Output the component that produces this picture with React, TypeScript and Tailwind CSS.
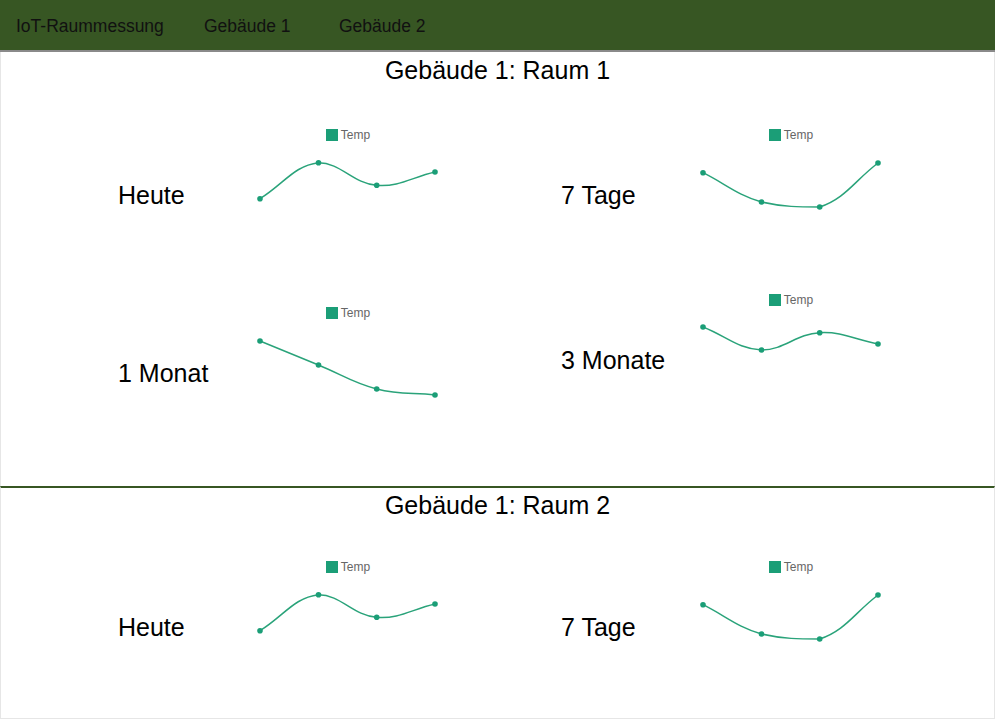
import React from "react";

type Pt = [number, number];

const XS = [12, 70.5, 128.7, 187];

function splinePath(ys: number[]): string {
  const pts: Pt[] = ys.map((y, i) => [XS[i], y]);
  const top = Math.min(...ys);
  const bottom = Math.max(...ys);
  const clamp = (v: number) => Math.max(top, Math.min(bottom, v));
  const t = 0.4;
  const cps: { p: Pt; n: Pt }[] = pts.map((cur, i) => {
    const prev = pts[i - 1] || cur;
    const next = pts[i + 1] || cur;
    const d01 = Math.hypot(cur[0] - prev[0], cur[1] - prev[1]);
    const d12 = Math.hypot(next[0] - cur[0], next[1] - cur[1]);
    const sum = d01 + d12 || 1;
    const fa = (t * d01) / sum;
    const fb = (t * d12) / sum;
    return {
      p: [cur[0] - fa * (next[0] - prev[0]), clamp(cur[1] - fa * (next[1] - prev[1]))],
      n: [cur[0] + fb * (next[0] - prev[0]), clamp(cur[1] + fb * (next[1] - prev[1]))],
    };
  });
  let d = `M ${pts[0][0]} ${pts[0][1]}`;
  for (let i = 1; i < pts.length; i++) {
    const c1 = cps[i - 1].n;
    const c2 = cps[i].p;
    d += ` C ${c1[0]} ${c1[1]} ${c2[0]} ${c2[1]} ${pts[i][0]} ${pts[i][1]}`;
  }
  return d;
}

function Chart({ ys }: { ys: number[] }) {
  return (
    <div className="flex w-[200px] shrink-0 flex-col">
      <div className="flex h-[16px] items-center justify-center">
        <span className="h-[12px] w-[12px] bg-[#1b9e77]" />
        <span className="ml-[3px] text-[12px] leading-[16px] text-[#666666]">Temp</span>
      </div>
      <svg width="200" height="120" viewBox="0 0 200 120">
        <path d={splinePath(ys)} fill="none" stroke="#2aa37a" strokeWidth="1.5" />
        {ys.map((y, i) => (
          <circle key={i} cx={XS[i]} cy={y} r="2.8" fill="#1b9e77" />
        ))}
      </svg>
    </div>
  );
}

function Cell({ label, ys, className }: { label: string; ys: number[]; className?: string }) {
  return (
    <div className={`flex w-[443px] shrink-0 items-center ${className || ""}`}>
      <div className="w-[130px] shrink-0 text-[25px] leading-[28px] text-black">{label}</div>
      <Chart ys={ys} />
    </div>
  );
}

const font = { fontFamily: '"Liberation Sans", Arial, sans-serif' };

export default function App() {
  return (
    <div className="w-[995px] overflow-hidden bg-white" style={font}>
      <nav className="flex h-[52px] items-center border-b-2 border-[#8a8a8a] bg-[#375623] pl-[16px] pt-[2px] text-[17.5px] text-[#111111]">
        <span className="w-[188px] shrink-0">IoT-Raummessung</span>
        <span className="w-[135px] shrink-0">Gebäude 1</span>
        <span>Gebäude 2</span>
      </nav>

      <section className="h-[434px] border-x border-[#e6e6e6]">
        <h1 className="pt-[4px] text-center text-[25px] leading-[28px] font-normal text-black">
          Gebäude 1: Raum 1
        </h1>
        <div className="mt-[43px] flex pl-[117px]">
          <Cell label="Heute" ys={[55.7, 19.7, 42.3, 29]} />
          <Cell label="7 Tage" ys={[29.7, 59, 64, 20]} />
        </div>
        <div className="flex items-start pl-[117px]">
          <Cell label="1 Monat" ys={[20, 44, 68, 74]} className="mt-[42px]" />
          <Cell label="3 Monate" ys={[19, 42, 24.7, 36]} className="mt-[29px]" />
        </div>
      </section>

      <section className="h-[233px] border-x border-b border-t-2 border-x-[#e6e6e6] border-b-[#e6e6e6] border-t-[#375623]">
        <h1 className="pt-[3px] text-center text-[25px] leading-[28px] font-normal text-black">
          Gebäude 1: Raum 2
        </h1>
        <div className="mt-[40px] flex pl-[117px]">
          <Cell label="Heute" ys={[55.7, 19.7, 42.3, 29]} />
          <Cell label="7 Tage" ys={[29.7, 59, 64, 20]} />
        </div>
      </section>
    </div>
  );
}
